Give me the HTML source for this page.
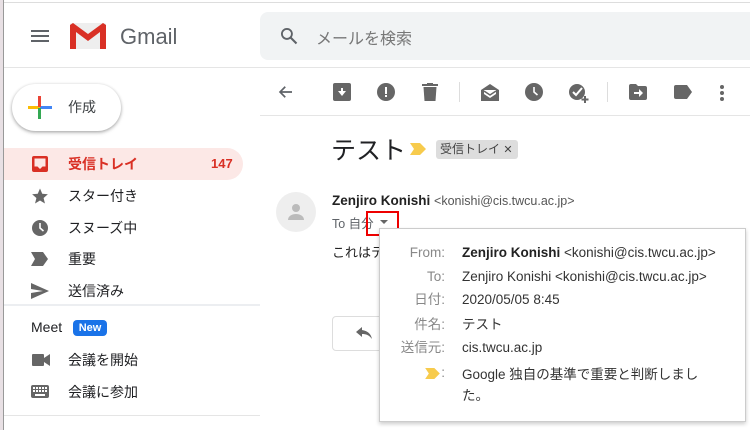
<!DOCTYPE html>
<html><head><meta charset="utf-8"><style>
*{margin:0;padding:0;box-sizing:border-box}
body{width:750px;height:430px;overflow:hidden;background:#fff;font-family:"Liberation Sans","Noto Sans CJK JP",sans-serif;position:relative;color:#202124}
.a{position:absolute}
.nav{position:absolute;left:68px;font-size:14px;color:#202124;line-height:20px}
.lbl{position:absolute;right:305px;color:#888;font-size:13.5px;text-align:right;line-height:18px}
.val{position:absolute;left:462px;font-size:13.5px;color:#333;line-height:18px}
</style></head><body>
<div class="a" style="left:0;top:0;width:3px;height:430px;background:#e8e0e4"></div>
<div class="a" style="left:3px;top:0;width:1px;height:430px;background:#999"></div>
<div class="a" style="left:4px;top:2px;width:746px;height:1px;background:#ddd"></div>
<div class="a" style="left:31px;top:30px;width:18px;height:2px;background:#5f6368"></div>
<div class="a" style="left:31px;top:35px;width:18px;height:2px;background:#5f6368"></div>
<div class="a" style="left:31px;top:40px;width:18px;height:2px;background:#5f6368"></div>
<svg class="a" style="left:70px;top:23px" width="36" height="26" viewBox="0 0 36 26">
<rect x="0" y="0" width="36" height="26" rx="2" fill="#eee"/>
<path d="M0 2 V26 H6 V9 L18 18 L30 9 V26 H36 V2 L33 0 L18 11 L3 0Z" fill="#d93025"/>
</svg>
<div class="a" style="left:120px;top:24px;font-size:22px;color:#5f6368">Gmail</div>
<div class="a" style="left:260px;top:12px;width:490px;height:48px;background:#f1f3f4;border-radius:8px 0 0 8px"></div>
<svg class="a" style="left:279px;top:26px" width="20" height="20" viewBox="0 0 24 24"><circle cx="9.5" cy="9.5" r="6" fill="none" stroke="#5f6368" stroke-width="2.2"/><path d="M14 14l7 7" stroke="#5f6368" stroke-width="2.5"/></svg>
<div class="a" style="left:316px;top:25px;font-size:16px;color:#777">メールを検索</div>
<div class="a" style="left:4px;top:67px;width:746px;height:1px;background:#e5e5e5"></div>
<div class="a" style="left:12px;top:84px;width:109px;height:47px;border-radius:24px;background:#fff;box-shadow:0 1px 3px rgba(0,0,0,.3),0 2px 5px rgba(0,0,0,.1)"></div>
<div class="a" style="left:28px;top:106px;width:12px;height:3px;background:#fbbc04"></div>
<div class="a" style="left:40px;top:106px;width:12px;height:3px;background:#4285f4"></div>
<div class="a" style="left:38px;top:96px;width:3px;height:11px;background:#ea4335"></div>
<div class="a" style="left:38px;top:108px;width:3px;height:11px;background:#34a853"></div>
<div class="a" style="left:68px;top:97px;font-size:14px;color:#3c4043">作成</div>
<div class="a" style="left:4px;top:148px;width:239px;height:32px;background:#fce8e6;border-radius:0 16px 16px 0"></div>
<svg class="a" style="left:31px;top:155px" width="18" height="18" viewBox="0 0 18 18"><rect x="1" y="1" width="16" height="16" rx="2" fill="#d93025"/><path d="M3.5 3.5h11v8h-3l-2.5 2.5-2.5-2.5h-3z" fill="#fce8e6"/></svg>
<div class="nav" style="top:154px;color:#d93025;font-weight:bold">受信トレイ</div>
<div class="a" style="left:211px;top:156px;font-size:13px;color:#d93025;font-weight:bold">147</div>
<div class="nav" style="top:186px">スター付き</div>
<svg class="a" style="left:31px;top:187px" width="18" height="18" viewBox="0 0 24 24"><path d="M12 2l3 7 7.5.6-5.7 5 1.8 7.4L12 18l-6.6 4 1.8-7.4-5.7-5L9 9z" fill="#666"/></svg>
<div class="nav" style="top:218px">スヌーズ中</div>
<svg class="a" style="left:31px;top:219px" width="18" height="18" viewBox="0 0 18 18"><circle cx="9" cy="9" r="8" fill="#666"/><path d="M9 4v5l3.5 3" stroke="#fff" stroke-width="1.6" fill="none"/></svg>
<div class="nav" style="top:249px">重要</div>
<svg class="a" style="left:31px;top:252px" width="18" height="14" viewBox="0 0 18 14"><path d="M0 0h12l5 7-5 7H0l4-7z" fill="#666"/></svg>
<div class="nav" style="top:281px">送信済み</div>
<svg class="a" style="left:31px;top:283px" width="18" height="16" viewBox="0 0 18 16"><path d="M0 0l18 8-18 8 0-6 12-2-12-2z" fill="#666"/></svg>
<div class="a" style="left:4px;top:304px;width:256px;height:2px;background:#eceef1"></div>
<div class="a" style="left:31px;top:319px;font-size:14px;color:#202124">Meet</div>
<div class="a" style="left:73px;top:320px;width:34px;height:16px;background:#1a73e8;border-radius:4px;color:#fff;font-size:11px;font-weight:bold;text-align:center;line-height:16px">New</div>
<div class="nav" style="top:350px">会議を開始</div>
<svg class="a" style="left:32px;top:354px" width="18" height="12" viewBox="0 0 18 12"><rect x="0" y="0" width="12" height="12" rx="1" fill="#666"/><path d="M12 4l6-4v12l-6-4z" fill="#666"/></svg>
<div class="nav" style="top:382px">会議に参加</div>
<svg class="a" style="left:31px;top:385px" width="18" height="13" viewBox="0 0 18 13"><rect width="18" height="13" rx="2" fill="#666"/><g fill="#fff"><rect x="2" y="2" width="2" height="2"/><rect x="5" y="2" width="2" height="2"/><rect x="8" y="2" width="2" height="2"/><rect x="11" y="2" width="2" height="2"/><rect x="14" y="2" width="2" height="2"/><rect x="2" y="5" width="2" height="2"/><rect x="5" y="5" width="2" height="2"/><rect x="8" y="5" width="2" height="2"/><rect x="11" y="5" width="2" height="2"/><rect x="14" y="5" width="2" height="2"/><rect x="4" y="9" width="10" height="2"/></g></svg>
<div class="a" style="left:4px;top:415px;width:256px;height:1px;background:#e5e5e5"></div>
<svg class="a" style="left:277px;top:83px" width="18" height="18" viewBox="0 0 24 24"><path d="M20 12H5M11 5l-7 7 7 7" stroke="#5f6368" stroke-width="2.2" fill="none"/></svg>
<svg class="a" style="left:333px;top:83px" width="18" height="18" viewBox="0 0 18 18"><rect x="0" y="0" width="18" height="18" rx="2" fill="#666"/><path d="M5 8h3V5h2v3h3l-4 5z" fill="#fff"/></svg>
<svg class="a" style="left:377px;top:83px" width="18" height="18" viewBox="0 0 18 18"><circle cx="9" cy="9" r="9" fill="#666"/><rect x="8" y="4" width="2" height="7" fill="#fff"/><rect x="8" y="12" width="2" height="2" fill="#fff"/></svg>
<svg class="a" style="left:422px;top:83px" width="16" height="18" viewBox="0 0 16 18"><rect x="0" y="1" width="16" height="2" fill="#666"/><rect x="5" y="0" width="6" height="2" fill="#666"/><path d="M1.5 4h13l-1 14h-11z" fill="#666"/></svg>
<div class="a" style="left:459px;top:82px;width:1px;height:20px;background:#ddd"></div>
<svg class="a" style="left:480px;top:82px" width="20" height="20" viewBox="0 0 20 20"><path d="M1 8l9-6 9 6v11H1z" fill="#666"/><path d="M4 8h12v4l-6 4-6-4z" fill="#fff"/><path d="M4 9l6 4 6-4" stroke="#666" stroke-width="1.5" fill="none"/></svg>
<svg class="a" style="left:525px;top:83px" width="18" height="18" viewBox="0 0 18 18"><circle cx="9" cy="9" r="9" fill="#666"/><path d="M9 4v5l3.5 3" stroke="#fff" stroke-width="1.6" fill="none"/></svg>
<svg class="a" style="left:568px;top:82px" width="22" height="22" viewBox="0 0 22 22"><circle cx="9" cy="10" r="8" fill="#666"/><path d="M5 10l3 3 6-7" stroke="#fff" stroke-width="2" fill="none"/><path d="M17 14v7M13.5 17.5h7" stroke="#666" stroke-width="2"/></svg>
<div class="a" style="left:607px;top:82px;width:1px;height:20px;background:#ddd"></div>
<svg class="a" style="left:629px;top:84px" width="18" height="16" viewBox="0 0 18 16"><path d="M0 2a2 2 0 012-2h5l2 2h7a2 2 0 012 2v10a2 2 0 01-2 2H2a2 2 0 01-2-2z" fill="#666"/><path d="M5 8h5V5l4 4-4 4v-3H5z" fill="#fff"/></svg>
<svg class="a" style="left:674px;top:85px" width="18" height="14" viewBox="0 0 18 14"><path d="M2 0h11l5 7-5 7H2a2 2 0 01-2-2V2a2 2 0 012-2z" fill="#666"/></svg>
<div class="a" style="left:720px;top:85px;width:4px;height:4px;border-radius:2px;background:#666"></div>
<div class="a" style="left:720px;top:91px;width:4px;height:4px;border-radius:2px;background:#666"></div>
<div class="a" style="left:720px;top:97px;width:4px;height:4px;border-radius:2px;background:#666"></div>
<div class="a" style="left:260px;top:115px;width:490px;height:1px;background:#e5e5e5"></div>
<div class="a" style="left:331px;top:131px;font-size:25px;color:#202124">テスト</div>
<svg class="a" style="left:410px;top:143px" width="16" height="12" viewBox="0 0 16 12"><path d="M0 0h10l6 6-6 6H0l4-6z" fill="#f7cb4d"/></svg>
<div class="a" style="left:436px;top:140px;width:82px;height:19px;background:#ddd;border-radius:3px;font-size:12px;color:#444;line-height:19px;padding-left:4px">受信トレイ <span style="font-size:11px">✕</span></div>
<div class="a" style="left:276px;top:192px;width:40px;height:40px;border-radius:20px;background:#eee"></div>
<svg class="a" style="left:286px;top:202px" width="20" height="20" viewBox="0 0 20 20"><circle cx="10" cy="6" r="4" fill="#bbb"/><path d="M2 18c0-4 4-6 8-6s8 2 8 6z" fill="#bbb"/></svg>
<div class="a" style="left:332px;top:193px;font-size:13.5px;font-weight:bold;color:#222">Zenjiro Konishi <span style="font-weight:normal;font-size:12.5px;color:#555">&lt;konishi@cis.twcu.ac.jp&gt;</span></div>
<div class="a" style="left:332px;top:213px;font-size:12.5px;color:#5f6368">To 自分</div>
<div class="a" style="left:380px;top:220px;width:0;height:0;border-left:4px solid transparent;border-right:4px solid transparent;border-top:4px solid #666"></div>
<div class="a" style="left:366px;top:211px;width:33px;height:25px;border:2px solid #e00"></div>
<div class="a" style="left:332px;top:242px;font-size:13px;color:#222">これはテ</div>
<div class="a" style="left:332px;top:316px;width:60px;height:35px;border:1px solid #ddd;border-radius:4px"></div>
<svg class="a" style="left:356px;top:327px" width="16" height="12" viewBox="0 0 16 12"><path d="M6 0L0 5l6 5V7c4 0 7 1 10 5-1-5-4-8-10-9z" fill="#666"/></svg>
<div class="a" style="left:379px;top:228px;width:367px;height:194px;background:#fff;border:1px solid #ccc;box-shadow:0 2px 4px rgba(0,0,0,.2)"></div>
<div class="lbl" style="top:244px">From:</div>
<div class="val" style="top:244px"><b style="color:#222">Zenjiro Konishi</b> &lt;konishi@cis.twcu.ac.jp&gt;</div>
<div class="lbl" style="top:268px">To:</div>
<div class="val" style="top:268px">Zenjiro Konishi &lt;konishi@cis.twcu.ac.jp&gt;</div>
<div class="lbl" style="top:291px">日付:</div>
<div class="val" style="top:291px">2020/05/05 8:45</div>
<div class="lbl" style="top:316px">件名:</div>
<div class="val" style="top:316px">テスト</div>
<div class="lbl" style="top:339px">送信元:</div>
<div class="val" style="top:339px">cis.twcu.ac.jp</div>
<svg class="a" style="left:425px;top:368px" width="15" height="11" viewBox="0 0 16 12"><path d="M0 0h10l6 6-6 6H0l4-6z" fill="#f7cb4d"/></svg>
<div class="lbl" style="top:364px">:</div>
<div class="val" style="top:364px;width:250px;line-height:21px">Google 独自の基準で重要と判断しました。</div>
</body></html>
